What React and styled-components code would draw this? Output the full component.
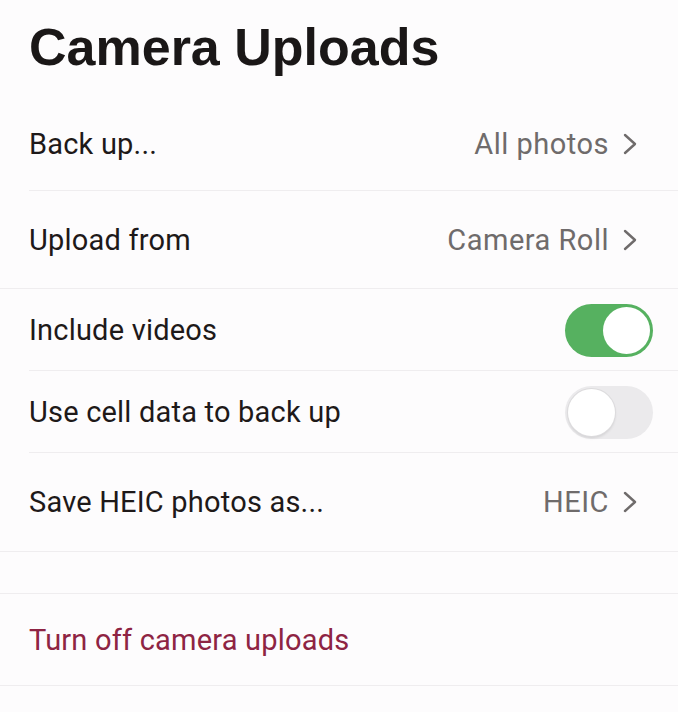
import React from 'react';
import styled, { createGlobalStyle } from 'styled-components';

const GlobalStyle = createGlobalStyle`
  html, body {
    margin: 0;
    padding: 0;
    background: #fdfcfd;
  }
  body {
    font-family: Roboto, "Liberation Sans", sans-serif;
    -webkit-font-smoothing: antialiased;
  }
`;

const Page = styled.div`
  width: 678px;
  min-height: 712px;
  background: #fdfcfd;
  overflow: hidden;
`;

const Title = styled.h1`
  margin: 0;
  height: 96px;
  padding: 17px 0 0 29px;
  box-sizing: border-box;
  font-family: "Liberation Sans", Arial, sans-serif;
  font-weight: 700;
  font-size: 52px;
  line-height: 60px;
  color: #1a1717;
`;

const Row = styled.div`
  display: flex;
  align-items: center;
  justify-content: space-between;
  height: ${(p) => p.$h}px;
  box-sizing: border-box;
  padding: 0 25px 0 29px;
  position: relative;
  border-bottom: ${(p) => (p.$full ? '1px solid #efedef' : 'none')};

  &::after {
    content: '';
    display: ${(p) => (p.$inset ? 'block' : 'none')};
    position: absolute;
    left: 29px;
    right: 0;
    bottom: 0;
    height: 1px;
    background: #efedef;
  }
`;

const Label = styled.span`
  font-size: 29px;
  letter-spacing: 0.2px;
  color: ${(p) => (p.$danger ? '#8e2443' : '#1e1919')};
`;

const Value = styled.span`
  display: flex;
  align-items: center;
  gap: 14px;
  margin-right: 16px;
  font-size: 29px;
  letter-spacing: 0.5px;
  color: #6f6b6b;
`;

const Spacer = styled.div`
  height: 41px;
  border-bottom: 1px solid #efedef;
`;

const Track = styled.div`
  width: 88px;
  height: 53px;
  border-radius: 27px;
  box-sizing: border-box;
  display: flex;
  align-items: center;
  padding: 0 3px;
  justify-content: ${(p) => (p.$on ? 'flex-end' : 'flex-start')};
  background: ${(p) => (p.$on ? '#56b160' : '#ebeaec')};
`;

const Knob = styled.div`
  width: 47px;
  height: 47px;
  border-radius: 50%;
  background: #fff;
  box-shadow: ${(p) =>
    p.$on ? 'none' : '0 0 0 1px #dcdbdd, 0 2px 3px rgba(0,0,0,0.12)'};
`;

const Chevron = () => (
  <svg width="14" height="22" viewBox="0 0 14 22" fill="none">
    <polyline points="2,2 12,11 2,20" stroke="#6f6b6b" strokeWidth="2.4" strokeLinecap="round" strokeLinejoin="round" />
  </svg>
);

const Toggle = ({ on }) => (
  <Track $on={on}>
    <Knob $on={on} />
  </Track>
);

export default function App() {
  return (
    <Page>
      <GlobalStyle />
      <Title>Camera Uploads</Title>
      <Row $h={95} $inset>
        <Label>Back up...</Label>
        <Value>All photos <Chevron /></Value>
      </Row>
      <Row $h={98} $full>
        <Label>Upload from</Label>
        <Value>Camera Roll <Chevron /></Value>
      </Row>
      <Row $h={82} $inset>
        <Label>Include videos</Label>
        <Toggle on />
      </Row>
      <Row $h={82} $inset>
        <Label>Use cell data to back up</Label>
        <Toggle />
      </Row>
      <Row $h={99} $full>
        <Label>Save HEIC photos as...</Label>
        <Value>HEIC <Chevron /></Value>
      </Row>
      <Spacer />
      <Row $h={92} $full>
        <Label $danger>Turn off camera uploads</Label>
      </Row>
    </Page>
  );
}
